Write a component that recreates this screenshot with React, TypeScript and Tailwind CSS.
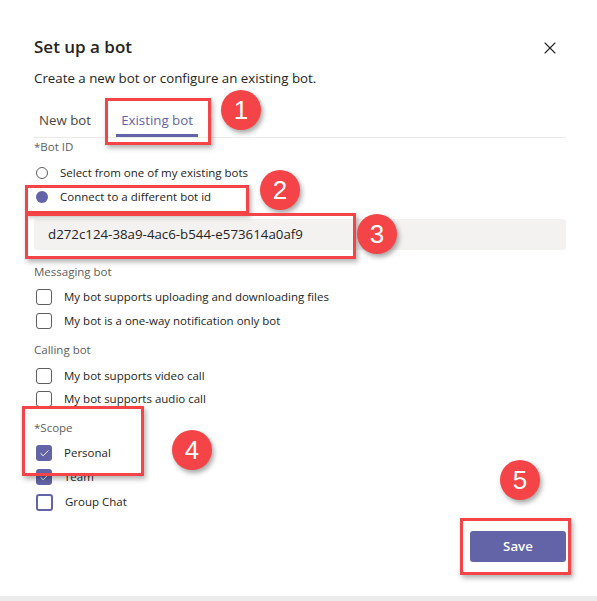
import { X, Check } from "lucide-react";

const font = { fontFamily: '"Segoe UI", "Open Sans", "Noto Sans", sans-serif' };

function Radio({ checked, label }: { checked?: boolean; label: string }) {
  return (
    <div className="flex items-center h-6">
      <span
        className={
          checked
            ? "ml-[2px] w-[12px] h-[12px] rounded-full bg-[#6264a7]"
            : "ml-[2px] w-[12px] h-[12px] rounded-full border border-[#605e5c] bg-white"
        }
      />
      <span className="ml-[12px] text-[11.5px] text-[#252423]">{label}</span>
    </div>
  );
}

function Box({ state, label }: { state?: "checked" | "focus"; label: string }) {
  let cls = "w-[16px] h-[16px] rounded-[3px] border border-[#605e5c] bg-white";
  if (state === "checked") cls = "w-[16px] h-[16px] rounded-[3px] bg-[#6264a7] flex items-center justify-center";
  if (state === "focus") cls = "w-[17px] h-[17px] rounded-[3px] border-2 border-[#6264a7] bg-white";
  return (
    <div className="flex items-center h-6">
      <span className={"ml-[2px] " + cls}>
        {state === "checked" && <Check size={11} strokeWidth={2} className="text-white" />}
      </span>
      <span className="ml-[12px] text-[11.5px] text-[#252423]">{label}</span>
    </div>
  );
}

function Badge({ n, className }: { n: number; className: string }) {
  return (
    <div
      className={
        "absolute w-[40px] h-[40px] rounded-full bg-[#f54447] text-white text-[26px] font-medium flex items-center justify-center shadow-[2px_3px_5px_rgba(0,0,0,0.35)] " +
        className
      }
      style={{ fontFamily: '"Liberation Sans", Arial, sans-serif' }}
    >
      {n}
    </div>
  );
}

function Mark({ className }: { className: string }) {
  return (
    <div
      className={
        "absolute border-[3px] border-[#f54447] shadow-[2px_3px_5px_rgba(0,0,0,0.3)] pointer-events-none " +
        className
      }
    />
  );
}

export default function App() {
  return (
    <div className="relative w-[597px] h-[601px] bg-white overflow-hidden text-[#252423]" style={font}>
      <div className="pl-[34px] pr-[31px] pt-[35px]">
        <div className="flex items-center justify-between h-6">
          <h1 className="text-[17px] font-semibold text-[#252423]">Set up a bot</h1>
          <X size={20} strokeWidth={1.3} className="text-[#252423] mr-[6px] mt-[2px]" />
        </div>
        <p className="mt-[9px] text-[13.3px] leading-5 text-[#252423]">
          Create a new bot or configure an existing bot.
        </p>

        <div className="mt-[22px] flex items-end border-b border-[#edebe9]">
          <div className="px-[5px] pb-[7px] text-[13.3px] leading-5 text-[#484644] whitespace-nowrap">New bot</div>
          <div className="ml-[20px] px-[5px] pb-[4px] text-[13.3px] leading-5 text-[#6264a7] border-b-[3px] border-[#6264a7] whitespace-nowrap">
            Existing bot
          </div>
        </div>

        <div className="text-[11.5px] leading-4 text-[#605e5c] mt-[1px]">*Bot ID</div>
        <div className="mt-[6px]">
          <Radio label="Select from one of my existing bots" />
          <Radio checked label="Connect to a different bot id" />
        </div>
        <div className="mt-[10px] h-[31px] bg-[#f3f2f1] rounded-[3px] flex items-center pl-[14px] text-[13.3px] text-[#252423]">
          d272c124-38a9-4ac6-b544-e573614a0af9
        </div>

        <div className="mt-[14px] text-[11.5px] leading-4 text-[#605e5c]">Messaging bot</div>
        <div className="mt-[5px]">
          <Box label="My bot supports uploading and downloading files" />
          <Box label="My bot is a one-way notification only bot" />
        </div>
        <div className="mt-[9px] text-[11.5px] leading-4 text-[#605e5c]">Calling bot</div>
        <div className="mt-[6px]">
          <Box label="My bot supports video call" />
          <div className="-mt-[1px]">
            <Box label="My bot supports audio call" />
          </div>
        </div>
        <div className="mt-[9px] text-[11.5px] leading-4 text-[#605e5c]">*Scope</div>
        <div className="mt-[5px]">
          <Box state="checked" label="Personal" />
          <Box state="checked" label="Team" />
          <div className="mt-[1px]">
            <Box state="focus" label="Group Chat" />
          </div>
        </div>

        <div className="mt-[17px] flex justify-end">
          <button className="w-[96px] h-[31px] rounded-[3px] bg-[#6264a7] text-white text-[13.3px] font-semibold">
            Save
          </button>
        </div>
      </div>

      <div className="absolute left-0 right-0 bottom-0 h-[5px] bg-[#ebebeb]" />

      <Mark className="left-[105px] top-[98px] w-[106px] h-[47px]" />
      <Badge n={1} className="left-[221px] top-[90px]" />
      <Mark className="left-[25px] top-[185px] w-[224px] h-[29px]" />
      <Badge n={2} className="left-[260px] top-[170px]" />
      <Mark className="left-[25px] top-[213px] w-[331px] h-[46px]" />
      <Badge n={3} className="left-[357px] top-[214px]" />
      <Mark className="left-[22px] top-[406px] w-[122px] h-[70px]" />
      <Badge n={4} className="left-[172px] top-[430px]" />
      <Badge n={5} className="left-[500px] top-[460px]" />
      <Mark className="left-[460px] top-[518px] w-[111px] h-[57px]" />
    </div>
  );
}
